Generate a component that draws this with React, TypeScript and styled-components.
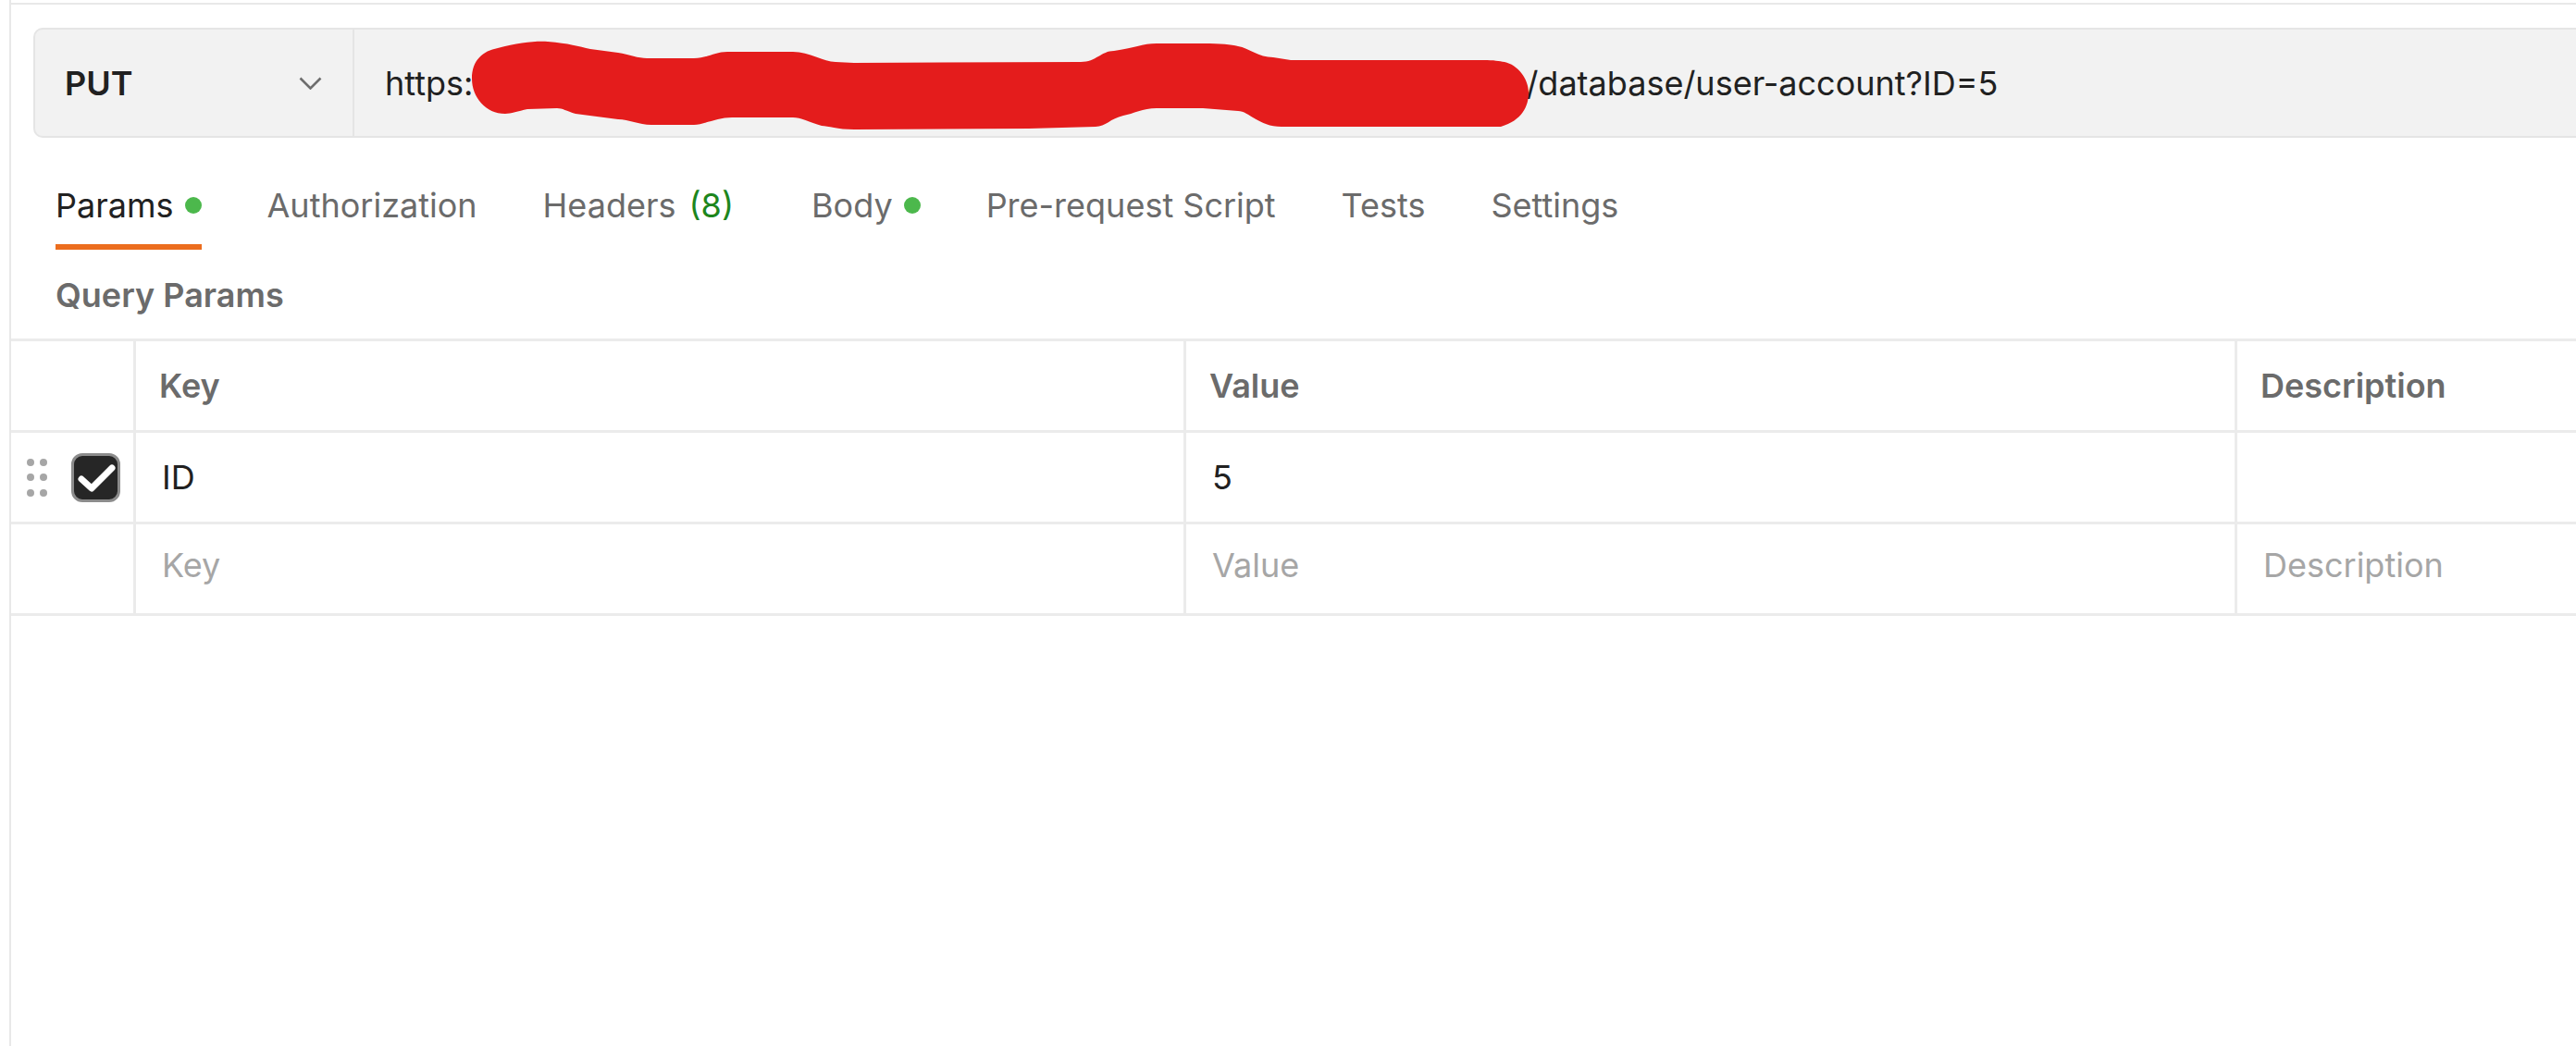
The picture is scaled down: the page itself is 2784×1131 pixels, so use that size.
import styled, { createGlobalStyle } from 'styled-components'

const GlobalStyle = createGlobalStyle`
  html, body {
    margin: 0;
    padding: 0;
    background: #ffffff;
    overflow: hidden;
  }
  body {
    font-family: Inter, "Noto Sans", "Liberation Sans", sans-serif;
    color: #212121;
  }
`

type TabItem = {
  label: string
  dot?: boolean
  count?: string
  active?: boolean
}

const tabs: TabItem[] = [
  { label: 'Params', dot: true, active: true },
  { label: 'Authorization' },
  { label: 'Headers', count: '(8)' },
  { label: 'Body', dot: true },
  { label: 'Pre-request Script' },
  { label: 'Tests' },
  { label: 'Settings' },
]

export default function App() {
  return (
    <>
      <GlobalStyle />
      <Pane>
        <TopRule />
        <Content>
          <UrlBar>
            <MethodSelect>
              <MethodName>PUT</MethodName>
              <svg width="25" height="14" viewBox="0 0 25 14">
                <polyline
                  points="1.5,1.5 12.5,12.5 23.5,1.5"
                  fill="none"
                  stroke="#6e6e6e"
                  strokeWidth="2.6"
                />
              </svg>
            </MethodSelect>
            <UrlField>
              <span>https:</span>
              <HostMask />
              <span>/database/user-account?ID=5</span>
            </UrlField>
            {/* hand-drawn redaction over the host name */}
            <Redaction width="1200" height="130" viewBox="500 30 1200 130">
              <path
                fill="#e41c1c"
                d="M538 52 C560 46 580 44 592 45 C615 47 625 50 638 53 L668 57 C680 59 690 63 699 63 L750 63
                   C765 63 772 56 786 56 L857 56 C875 56 890 67 903 67 L923 68 L1168 67
                   C1185 67 1190 55 1204 55 C1225 52 1235 47 1250 47 L1300 47 C1320 47 1330 48 1338 50
                   C1350 52 1360 62 1376 62 L1395 65 L1603 65 C1615 65 1620 66 1626 67
                   C1640 70 1652 85 1652 100 C1652 115 1645 130 1622 137 L1555 137 L1385 137
                   C1360 137 1350 120 1338 120 L1300 117 L1250 117 C1235 117 1225 123 1214 125
                   C1200 128 1195 137 1184 137 L1112 139 L923 140 C905 140 895 136 888 136
                   C875 132 865 127 857 127 L791 127 C775 127 760 135 750 135 L704 135
                   C690 135 680 129 668 129 L622 123 C612 120 608 117 602 117 L570 118
                   C560 120 552 123 546 123 C525 123 510 105 510 85 C510 65 522 55 538 52 Z"
              />
            </Redaction>
          </UrlBar>

          <TabBar>
            {tabs.map((t) => (
              <Tab key={t.label} $active={!!t.active} $wide={!!t.count}>
                {t.label}
                {t.count && <Count>{t.count}</Count>}
                {t.dot && <Dot />}
              </Tab>
            ))}
          </TabBar>

          <SectionTitle>Query Params</SectionTitle>
        </Content>

        <ParamsTable>
          <Row>
            <Cell />
            <HeadCell>Key</HeadCell>
            <HeadCell>Value</HeadCell>
            <HeadCell $last>Description</HeadCell>
          </Row>
          <Row>
            <Cell>
              <DragHandle>
                {Array.from({ length: 6 }).map((_, i) => (
                  <Grip key={i} />
                ))}
              </DragHandle>
              <CheckBox>
                <svg width="47" height="47" viewBox="0 0 47 47">
                  <polyline
                    points="8,25 19,35 41,13"
                    fill="none"
                    stroke="#ffffff"
                    strokeWidth="7"
                    strokeLinecap="round"
                    strokeLinejoin="round"
                  />
                </svg>
              </CheckBox>
            </Cell>
            <TextCell>ID</TextCell>
            <TextCell>5</TextCell>
            <TextCell $last />
          </Row>
          <Row>
            <Cell />
            <TextCell $placeholder>Key</TextCell>
            <TextCell $placeholder>Value</TextCell>
            <TextCell $placeholder $last>
              Description
            </TextCell>
          </Row>
        </ParamsTable>
      </Pane>
    </>
  )
}

const Pane = styled.main`
  box-sizing: border-box;
  margin-left: 10px;
  height: 100vh;
  padding-top: 3px;
  border-left: 2px solid #e8e8e8;
  overflow: hidden;
`

const TopRule = styled.div`
  height: 2px;
  background: #e8e8e8;
`

const Content = styled.div`
  padding: 25px 0 0 24px;
`

const UrlBar = styled.div`
  position: relative;
  box-sizing: border-box;
  display: flex;
  height: 119px;
  margin-right: -40px;
  background: #f2f2f2;
  border: 2px solid #e5e5e5;
  border-radius: 10px;
`

const MethodSelect = styled.div`
  box-sizing: border-box;
  flex: none;
  width: 345px;
  display: flex;
  align-items: center;
  justify-content: space-between;
  padding: 0 33px 0 32px;
  border-right: 2px solid #e5e5e5;
`

const MethodName = styled.span`
  font-size: 36px;
  font-weight: 600;
  color: #212121;
`

const UrlField = styled.div`
  display: flex;
  align-items: center;
  padding-left: 33px;
  font-size: 36px;
  color: #212121;
  white-space: nowrap;
`

const HostMask = styled.span`
  flex: none;
  width: 1138px;
`

const Redaction = styled.svg`
  position: absolute;
  left: 462px;
  top: -2px;
`

const TabBar = styled.nav`
  display: flex;
  gap: 71px;
  margin-top: 31px;
  padding-left: 24px;
`

const Tab = styled.div<{ $active: boolean; $wide: boolean }>`
  display: flex;
  align-items: center;
  padding: 20px 0;
  margin-right: ${({ $wide }) => ($wide ? '13px' : '0')};
  font-size: 36px;
  line-height: 44px;
  color: ${({ $active }) => ($active ? '#212121' : '#6b6b6b')};
  border-bottom: 6px solid ${({ $active }) => ($active ? '#ec6d1e' : 'transparent')};
`

const Count = styled.span`
  margin-left: 14px;
  color: #1d861d;
`

const Dot = styled.span`
  width: 18px;
  height: 18px;
  margin-left: 12px;
  border-radius: 50%;
  background: #4cb84c;
`

const SectionTitle = styled.h2`
  margin: 27px 0 25px;
  padding-left: 24px;
  font-size: 36px;
  line-height: 44px;
  font-weight: 600;
  color: #6b6b6b;
`

const ParamsTable = styled.div`
  border-top: 3px solid #ebebeb;
`

const Row = styled.div`
  box-sizing: border-box;
  display: grid;
  grid-template-columns: 135px 1135px 1136px 1fr;
  height: 99px;
  border-bottom: 3px solid #ebebeb;
`

const Cell = styled.div<{ $last?: boolean }>`
  box-sizing: border-box;
  display: flex;
  align-items: center;
  padding-left: 17px;
  border-right: ${({ $last }) => ($last ? 'none' : '3px solid #ebebeb')};
`

const HeadCell = styled(Cell)`
  padding-left: 25px;
  font-size: 36px;
  font-weight: 600;
  color: #6b6b6b;
`

const TextCell = styled(Cell)<{ $placeholder?: boolean }>`
  padding-left: 28px;
  padding-bottom: ${({ $placeholder }) => ($placeholder ? '8px' : '0')};
  font-size: 36px;
  color: ${({ $placeholder }) => ($placeholder ? '#a6a6a6' : '#212121')};
`

const DragHandle = styled.div`
  display: grid;
  grid-template-columns: 8px 8px;
  column-gap: 6px;
  row-gap: 8.5px;
  margin-right: 26px;
`

const Grip = styled.span`
  width: 8px;
  height: 8px;
  border-radius: 50%;
  background: #a6a6a6;
`

const CheckBox = styled.div`
  box-sizing: border-box;
  width: 53px;
  height: 53px;
  display: flex;
  align-items: center;
  justify-content: center;
  background: #262626;
  border: 3px solid #8c8c8c;
  border-radius: 12px;
`
